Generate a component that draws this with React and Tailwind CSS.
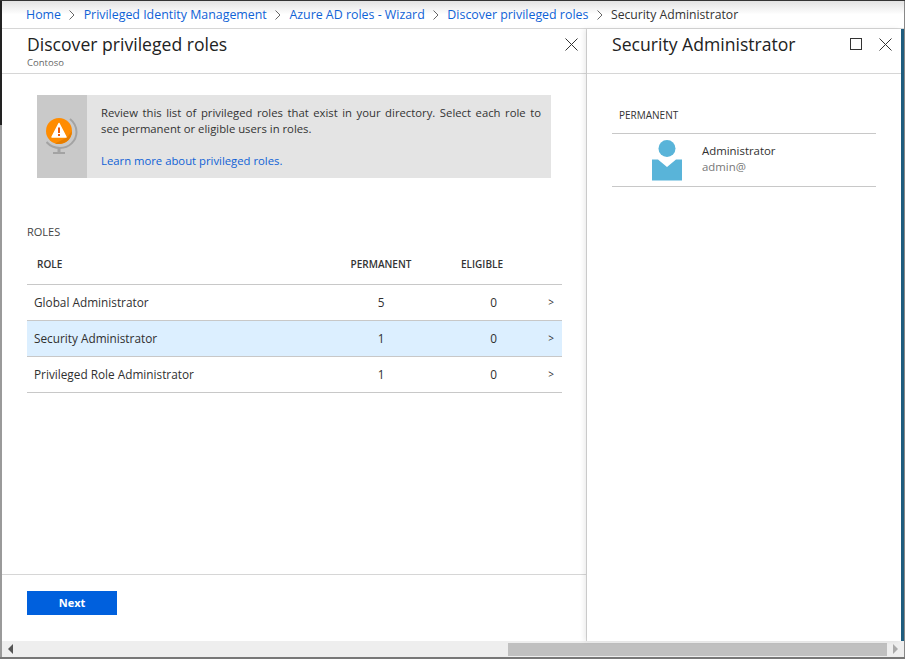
const font = { fontFamily: '"Open Sans", "Noto Sans", sans-serif' };

const crumbs = [
  "Home",
  "Privileged Identity Management",
  "Azure AD roles - Wizard",
  "Discover privileged roles",
];

const roles = [
  { name: "Global Administrator", permanent: 5, eligible: 0 },
  { name: "Security Administrator", permanent: 1, eligible: 0, selected: true },
  { name: "Privileged Role Administrator", permanent: 1, eligible: 0 },
];

function CloseIcon() {
  return (
    <svg width="13" height="13" viewBox="0 0 13 13" fill="none" stroke="#333" strokeWidth="1">
      <path d="M0.5 0.5 12.5 12.5M12.5 0.5 0.5 12.5" />
    </svg>
  );
}

function Chevron() {
  return (
    <svg width="6" height="10" viewBox="0 0 6 10" fill="none" stroke="#666" strokeWidth="1">
      <path d="M0.5 0.5 5 5 0.5 9.5" />
    </svg>
  );
}

function GlobeWarning() {
  return (
    <svg width="32" height="38" viewBox="0 0 32 38">
      <path d="M24 1C29 5 30.500 10 30.500 14 30.500 23 23 30 14 30 9 30 4 28 0.500 24" fill="none" stroke="#a3a3a3" strokeWidth="2" />
      <rect x="11.500" y="30" width="3" height="4" fill="#a3a3a3" />
      <rect x="7" y="34" width="12" height="2" fill="#a3a3a3" />
      <circle cx="13" cy="13" r="13" fill="#ff8c00" />
      <path d="M21 19.500 26 13A13 13 0 0 1 9 25.400Z" fill="#e67e00" />
      <path d="M13 5.500 20 19H6Z" fill="#fff" stroke="#fff" strokeWidth="1.500" strokeLinejoin="round" />
      <rect x="12" y="9.500" width="2" height="5.500" fill="#e8590c" />
      <rect x="12" y="16" width="2" height="2" fill="#e8590c" />
    </svg>
  );
}

function UserIcon() {
  return (
    <svg width="30" height="41" viewBox="0 0 30 41">
      <circle cx="15" cy="8.500" r="8.500" fill="#59b4d9" />
      <path d="M0 19.500H6L15 27 24 19.500H30V40.500H0Z" fill="#59b4d9" />
    </svg>
  );
}

export default function App() {
  return (
    <div style={font} className="w-[905px] h-[659px] flex flex-col overflow-hidden bg-white text-[#303030]">
      <div className="h-px shrink-0 bg-[#333]" />
      <div className="flex-1 flex min-h-0">
        {/* window edge */}
        <div className="w-[2px] flex flex-col">
          <div className="h-[124px] bg-[#222]" />
          <div className="flex-1 bg-[#9a9a9a]" />
        </div>

        <div className="flex-1 flex flex-col min-w-0">
          {/* breadcrumb */}
          <div className="h-[28px] shrink-0 flex items-center pl-[24px] pt-[1px] gap-[8.300px] text-[12.400px] border-b border-[#d6d6d6] bg-gradient-to-b from-[#e2e2e2] via-white to-white">
            {crumbs.map((c) => (
              <div key={c} className="flex items-center gap-[8.300px]">
                <span className="text-[#0f62d6]">{c}</span>
                <Chevron />
              </div>
            ))}
            <span className="text-[#333] text-[12.200px]">Security Administrator</span>
          </div>

          <div className="flex-1 flex min-h-0">
            {/* left blade */}
            <div className="w-[585px] flex flex-col border-r border-[#d8d8d8]">
              <div className="h-[45px] shrink-0 flex justify-between border-b border-[#d6d6d6] pl-[25px] pr-[8px]">
                <div>
                  <div className="text-[17.600px] leading-[22px] mt-[4px] text-[#222] font-medium">Discover privileged roles</div>
                  <div className="text-[9.500px] leading-[13px] mt-[1px] text-[#666]">Contoso</div>
                </div>
                <div className="mt-[9px]">
                  <CloseIcon />
                </div>
              </div>

              <div className="flex-1 flex flex-col pl-[25px] pr-[24px]">
                {/* info banner */}
                <div className="ml-[10px] mt-[21px] w-[514px] h-[83px] flex bg-[#e4e4e4]">
                  <div className="w-[50px] bg-[#c9c9c9] flex items-center justify-center">
                    <GlobeWarning />
                  </div>
                  <div className="flex-1 pl-[14px] pr-[10px] pt-[10px] text-[11.300px] leading-[16px] text-[#333]">
                    <p className="[text-align-last:justify]">
                      Review this list of privileged roles that exist in your directory. Select each role to
                    </p>
                    <p>see permanent or eligible users in roles.</p>
                    <p className="mt-[16px] text-[#0f62d6]">Learn more about privileged roles.</p>
                  </div>
                </div>

                <div className="mt-[47px] text-[11px] leading-[14px] text-[#444]">ROLES</div>

                {/* table */}
                <div className="w-[535px] mt-[10px]">
                  <div className="h-[36px] flex items-start pt-[9px] text-[10px] leading-[12px] font-semibold text-[#333] border-b border-[#c8c8c8]">
                    <div className="w-[323px] pl-[10px]">ROLE</div>
                    <div className="w-[62px] text-center">PERMANENT</div>
                    <div className="w-[41px] ml-[49px] text-center">ELIGIBLE</div>
                  </div>
                  {roles.map((r) => (
                    <div
                      key={r.name}
                      className={`h-[36px] flex items-center text-[11.800px] border-b border-[#c8c8c8] ${r.selected ? "bg-[#dcefff]" : ""}`}
                    >
                      <div className="w-[323px] pl-[7px]">{r.name}</div>
                      <div className="w-[62px] text-center">{r.permanent}</div>
                      <div className="w-[41px] ml-[61px] text-center">{r.eligible}</div>
                      <div className="flex-1 text-right pr-[8px] text-[10px]">&gt;</div>
                    </div>
                  ))}
                </div>
              </div>

              {/* footer */}
              <div className="h-[67px] shrink-0 flex items-start border-t border-[#d6d6d6] pl-[25px] pt-[16px]">
                <button className="w-[90px] h-[24px] bg-[#0060dd] text-white text-[11px] font-bold">Next</button>
              </div>
            </div>

            {/* right blade */}
            <div className="flex-1 flex flex-col relative shadow-[-3px_0_5px_rgba(0,0,0,0.08)]">
              <div className="h-[45px] shrink-0 flex justify-between border-b border-[#d6d6d6] pl-[25px] pr-[9px]">
                <div className="text-[17.600px] leading-[22px] mt-[4px] text-[#222] font-medium">Security Administrator</div>
                <div className="flex gap-[17px] mt-[9px]">
                  <div className="w-[12px] h-[12px] border border-[#333]" />
                  <CloseIcon />
                </div>
              </div>
              <div className="ml-[25px] w-[264px] mt-[35px]">
                <div className="h-[25px] pl-[7px] text-[10px] leading-[12px] text-[#333] border-b border-[#c8c8c8]">PERMANENT</div>
                <div className="h-[53px] flex border-b border-[#c8c8c8]">
                  <div className="ml-[40px] mt-[6px]">
                    <UserIcon />
                  </div>
                  <div className="ml-[20px] mt-[9px] text-[11.400px] leading-[16px]">
                    <div>Administrator</div>
                    <div className="text-[#777]">admin@</div>
                  </div>
                </div>
              </div>
            </div>

            <div className="w-[3px] bg-[#1f5d7f]" />
          </div>

          {/* horizontal scrollbar */}
          <div className="h-[16px] shrink-0 flex items-center bg-[#eeeeee]">
            <div className="w-[16px] flex justify-center">
              <div className="w-0 h-0 border-y-[5px] border-y-transparent border-r-[5px] border-r-[#555]" />
            </div>
            <div className="ml-[490px] w-[379px] h-[13px] bg-[#c0c0c0]" />
            <div className="flex-1 flex justify-center">
              <div className="w-0 h-0 border-y-[5px] border-y-transparent border-l-[5px] border-l-[#aaa]" />
            </div>
          </div>
        </div>

        <div className="w-px bg-[#888]" />
      </div>
      <div className="h-[2px] shrink-0 bg-[#777]" />
    </div>
  );
}
